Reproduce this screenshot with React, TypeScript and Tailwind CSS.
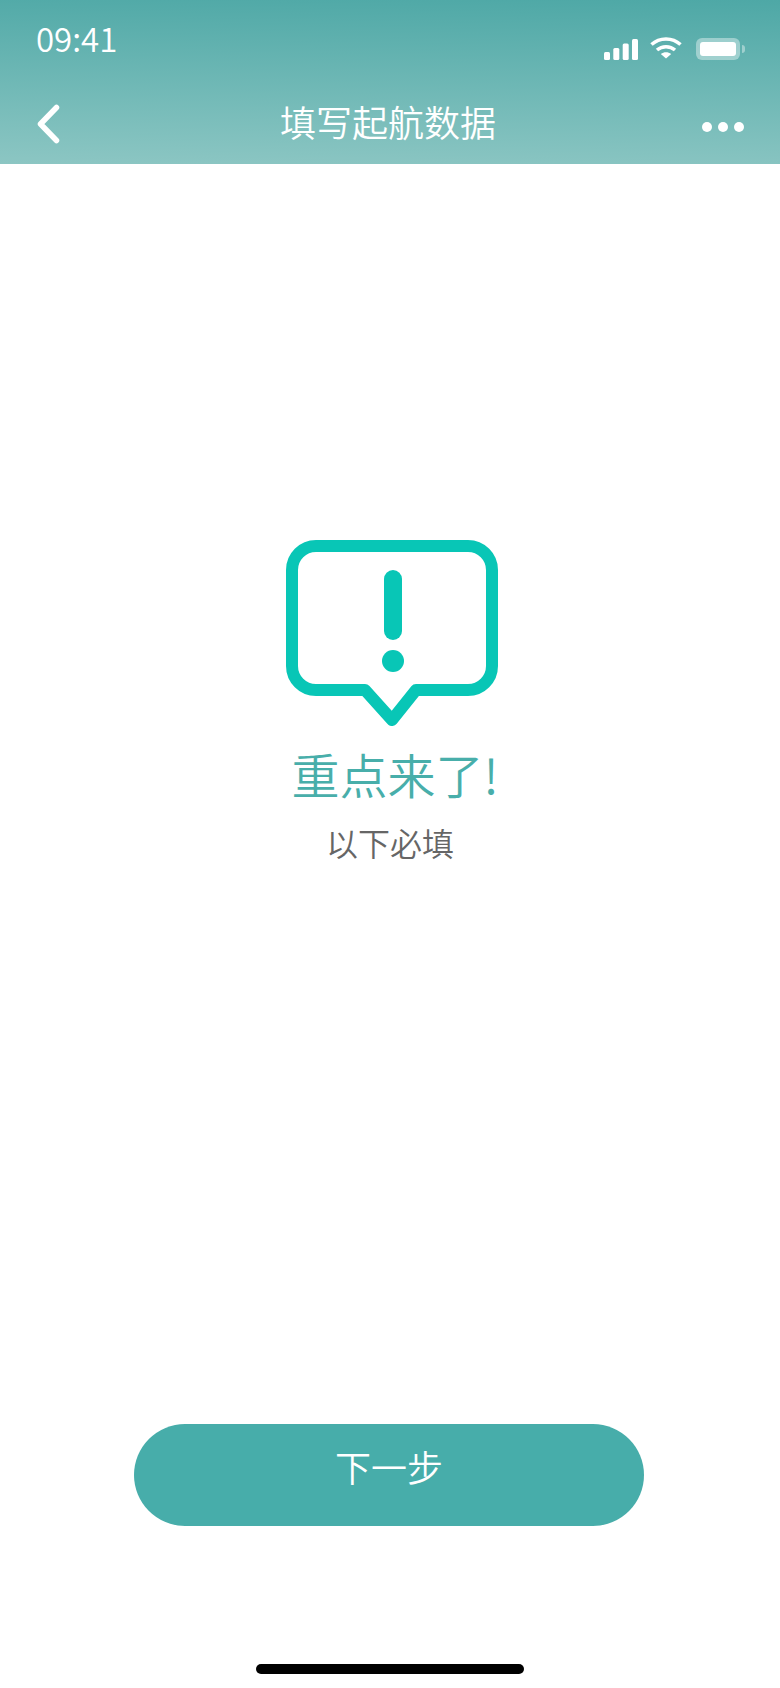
export default function App() {
  const font = { fontFamily: '"Noto Sans CJK SC", "Noto Sans", sans-serif' };
  return (
    <div className="w-[780px] h-[1688px] bg-white flex flex-col items-center overflow-hidden" style={font}>
      <header className="w-full h-[164px] shrink-0 bg-[linear-gradient(181deg,#4ea8a6_0%,#8cc6c3_100%)] flex flex-col text-white">
        <div className="h-[80px] pl-[36px] pr-[35px] flex justify-between">
          <span className="text-[33px] leading-[40px] mt-[18px] font-[350]">09:41</span>
          <div className="flex items-end h-[60px]">
            <svg width="34" height="21" viewBox="0 0 34 21" fill="#fff">
              <rect x="0" y="13" width="6" height="8" rx="1.500" />
              <rect x="9.300" y="9" width="6" height="12" rx="1.500" />
              <rect x="18.700" y="4.500" width="6" height="16.500" rx="1.500" />
              <rect x="28" y="0" width="6" height="21" rx="1.500" />
            </svg>
            <svg width="32" height="23" viewBox="0 0 32 23" fill="none" stroke="#fff" className="ml-[12px] mb-[1px]">
              <path d="M1.500 8.500C9.500 1 22.500 1 30.500 8.500" strokeWidth="3.500" />
              <path d="M7 14C12 9.500 20 9.500 25 14" strokeWidth="3.500" />
              <path d="M16 22.500L10.800 18C14 15.500 18 15.500 21.200 18Z" fill="#fff" stroke="none" />
            </svg>
            <div className="flex items-center ml-[14px]">
              <div className="w-[44px] h-[22px] rounded-[6px] bg-white/40 p-[4px]">
                <div className="w-full h-full rounded-[3px] bg-white" />
              </div>
              <div className="w-[3px] h-[8px] bg-white/40 rounded-r-full ml-[2px]" />
            </div>
          </div>
        </div>
        <div className="flex-1 px-[36px] flex items-start justify-between">
          <svg width="24" height="40" viewBox="0 0 24 40" fill="none" stroke="#fff" strokeWidth="5.500" strokeLinecap="round" strokeLinejoin="round" className="mt-[24px]">
            <path d="M20.500 3.500L4.500 20L20.500 36.500" />
          </svg>
          <span className="text-[36px] leading-[44px] mt-[19px] ml-[14px] font-[350]">填写起航数据</span>
          <div className="flex gap-[6px] mt-[42px]">
            <span className="w-[10px] h-[10px] rounded-full bg-white" />
            <span className="w-[10px] h-[10px] rounded-full bg-white" />
            <span className="w-[10px] h-[10px] rounded-full bg-white" />
          </div>
        </div>
      </header>

      <main className="flex flex-col items-center pt-[376px] h-[1260px] shrink-0 ml-[4px]">
        <svg width="212" height="186" viewBox="0 0 212 186" fill="none">
          <path
            d="M30 6H182A24 24 0 0 1 206 30V126A24 24 0 0 1 182 150H130L106 180L79 150H30A24 24 0 0 1 6 126V30A24 24 0 0 1 30 6Z"
            stroke="#08c6b6"
            strokeWidth="12"
            strokeLinejoin="round"
          />
          <rect x="98" y="30" width="18" height="70" rx="9" fill="#08c6b6" />
          <circle cx="107" cy="121" r="11" fill="#08c6b6" />
        </svg>
        <h1 className="text-[48px] leading-[60px] mt-[17px] ml-[6px] text-[#48aeaa] font-[350]">重点来了!</h1>
        <p className="text-[32px] leading-[44px] mt-[17px] ml-[-4px] text-[#666666] font-[350]">以下必填</p>
      </main>

      <button className="w-[510px] h-[102px] shrink-0 rounded-[51px] bg-[#47adaa] text-white text-[36px] leading-[44px] pb-[18px] ml-[-2px] font-[350]">
        下一步
      </button>

      <div className="w-[268px] h-[10px] shrink-0 rounded-full bg-black mt-[138px]" />
    </div>
  );
}
